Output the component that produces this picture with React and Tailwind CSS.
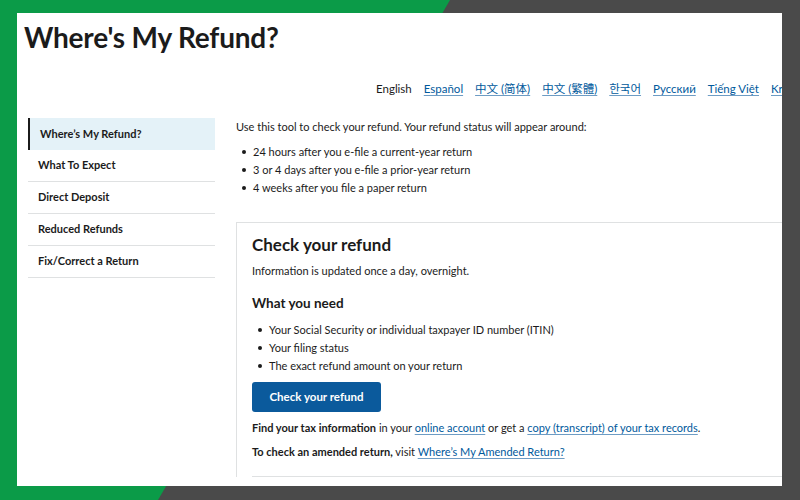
import React from "react"

const langs = ["Español", "中文 (简体)", "中文 (繁體)", "한국어", "Русский", "Tiếng Việt", "Kreyòl ayisyen"]

const navItems = ["Where’s My Refund?", "What To Expect", "Direct Deposit", "Reduced Refunds", "Fix/Correct a Return"]

function Bullets({ items }) {
  return (
    <ul className="flex flex-col">
      {items.map((t) => (
        <li key={t} className="flex h-[18px] items-center gap-[7px] pl-[6px]">
          <span className="h-[4px] w-[4px] rounded-full bg-[#1b1b1b]" />
          <span>{t}</span>
        </li>
      ))}
    </ul>
  )
}

export default function App() {
  return (
    <div className="relative h-[500px] w-[800px] overflow-hidden bg-[#4a4a4a] font-['Lato','Noto_Sans_CJK_SC',sans-serif] text-[#1b1b1b]">
      <div className="absolute inset-0 bg-[#0b9b48] [clip-path:polygon(0_0,450px_0,158px_500px,0_500px)]" />

      <div className="relative pl-[17px] pt-[13px]">
        <div className="h-[473px] w-[765px] overflow-hidden bg-white">
          <h1 className="pl-[7px] pt-[5px] text-[28px] leading-[38px] font-bold tracking-[-0.2px]">Where's My Refund?</h1>

          <div className="mt-[23px] flex h-[20px] items-center whitespace-nowrap pl-[359px] text-[11.5px]">
            <span className="pr-[6px]">English</span>
            {langs.map((l) => (
              <React.Fragment key={l}>
                <span className="h-[17px] w-px bg-[#a9c6dc]" />
                <span className="px-[6px] text-[#00599c] underline decoration-[#6d9cc4] underline-offset-2">{l}</span>
              </React.Fragment>
            ))}
          </div>

          <div className="mt-[19px] flex gap-[21px]">
            <nav className="box-content flex w-[187px] shrink-0 flex-col pl-[11px]">
              {navItems.map((t, i) => (
                <div
                  key={t}
                  className={
                    i === 0
                      ? "flex h-[32px] items-center border-l-2 border-[#1b1b1b] bg-[#e4f2f8] pl-[10px] text-[11px] font-bold"
                      : "flex h-[32px] items-center border-b border-[#dfe1e2] pl-[10px] text-[11px] font-bold"
                  }
                >
                  {t}
                </div>
              ))}
            </nav>

            <main className="flex-1 text-[11px]">
              <p className="mt-[1px] leading-[16px]">Use this tool to check your refund. Your refund status will appear around:</p>
              <div className="mt-[8px]">
                <Bullets
                  items={[
                    "24 hours after you e-file a current-year return",
                    "3 or 4 days after you e-file a prior-year return",
                    "4 weeks after you file a paper return",
                  ]}
                />
              </div>

              <section className="mt-[25px] w-[700px] border-l border-t border-[#dfe1e2] pl-[15px] pt-[10px]">
                <h2 className="text-[17px] leading-[24px] font-bold">Check your refund</h2>
                <p className="mt-[6px] leading-[16px]">Information is updated once a day, overnight.</p>
                <h3 className="mt-[15px] text-[13.5px] leading-[18px] font-bold">What you need</h3>
                <div className="mt-[9px]">
                  <Bullets
                    items={[
                      "Your Social Security or individual taxpayer ID number (ITIN)",
                      "Your filing status",
                      "The exact refund amount on your return",
                    ]}
                  />
                </div>
                <button className="mt-[7px] h-[30px] w-[129px] rounded-[3px] bg-[#0b5a9c] text-[11.5px] font-bold text-white">
                  Check your refund
                </button>
                <p className="mt-[8px] leading-[16px]">
                  <b>Find your tax information</b> in your{" "}
                  <a className="text-[#00599c] underline decoration-[#6d9cc4] underline-offset-2">online account</a> or get a{" "}
                  <a className="text-[#00599c] underline decoration-[#6d9cc4] underline-offset-2">copy (transcript) of your tax records</a>.
                </p>
                <p className="mt-[8px] leading-[16px]">
                  <b>To check an amended return,</b> visit{" "}
                  <a className="text-[#00599c] underline decoration-[#6d9cc4] underline-offset-2">Where’s My Amended Return?</a>
                </p>
                <div className="mt-[16px] h-px w-full bg-[#dfe1e2]" />
              </section>
            </main>
          </div>
        </div>
      </div>
    </div>
  )
}
